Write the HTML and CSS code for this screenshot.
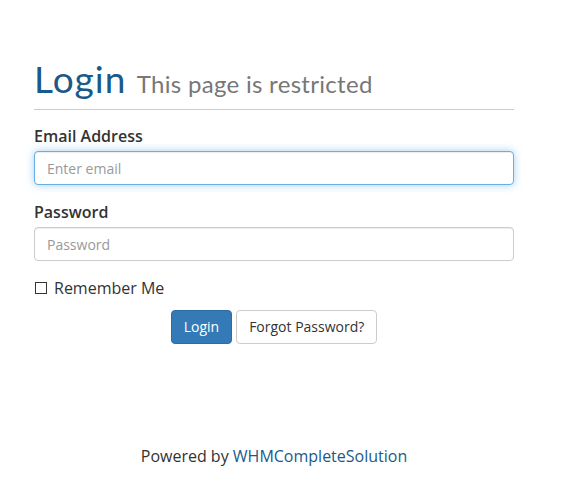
FILE: index.html
```html
<!DOCTYPE html>
<html>
<head>
<meta charset="utf-8">
<link rel="stylesheet" href="styles.css">
</head>
<body>
<div class="page">
  <div class="header">
    <h1 class="title">Login <small class="subtitle">This page is restricted</small></h1>
  </div>
  <form class="form">
    <div class="group">
      <label class="label">Email Address</label>
      <input class="input input-focus" type="text" placeholder="Enter email">
    </div>
    <div class="group">
      <label class="label">Password</label>
      <input class="input" type="password" placeholder="Password">
    </div>
    <div class="check">
      <span class="box"></span>
      <span class="check-text">Remember Me</span>
    </div>
    <div class="actions">
      <button type="button" class="btn btn-primary">Login</button>
      <button type="button" class="btn btn-default">Forgot Password?</button>
    </div>
  </form>
  <div class="footer">Powered by <a class="link" href="#">WHMCompleteSolution</a></div>
</div>
</body>
</html>
```
FILE: styles.css
```css
html, body {
  margin: 0;
  padding: 0;
  background: #fff;
}
body {
  font-family: "Open Sans", "Liberation Sans", sans-serif;
  font-size: 14px;
  color: #333;
}
.page {
  width: 480px;
  margin-left: 34px;
  padding-top: 59px;
}
.header {
  border-bottom: 1px solid #ccc;
  padding-bottom: 5px;
}
.title {
  margin: 0;
  font-family: "Lato", "Open Sans", sans-serif;
  font-weight: 400;
  font-size: 37px;
  line-height: 40px;
  letter-spacing: 1px;
  color: #1a5a8b;
}
.subtitle {
  font-size: 24px;
  color: #777;
  font-weight: 400;
  letter-spacing: 0.3px;
}
.form {
  margin-top: 15px;
}
.group {
  display: flex;
  flex-direction: column;
  margin-bottom: 16px;
}
.label {
  font-weight: 600;
  font-size: 16px;
  line-height: 22px;
  margin-bottom: 4px;
}
.input {
  box-sizing: border-box;
  height: 34px;
  width: 100%;
  padding: 6px 12px;
  border: 1px solid #ccc;
  border-radius: 4px;
  font-family: "Open Sans", sans-serif;
  font-size: 14px;
  color: #555;
  outline: none;
  box-shadow: inset 0 1px 1px rgba(0,0,0,.075);
}
.input::placeholder {
  color: #999;
}
.input-focus {
  border-color: #66afe9;
  box-shadow: inset 0 1px 1px rgba(0,0,0,.075), 0 0 8px rgba(102,175,233,.6);
}
.check {
  display: flex;
  align-items: center;
  gap: 7px;
  font-size: 16px;
  line-height: 22px;
  padding-left: 1px;
}
.box {
  box-sizing: border-box;
  width: 12px;
  height: 12px;
  border: 1px solid #333;
}
.actions {
  display: flex;
  justify-content: center;
  gap: 4px;
  margin-top: 11px;
}
.btn {
  font-family: "Open Sans", sans-serif;
  font-size: 14px;
  line-height: 20px;
  padding: 6px 12px;
  border-radius: 4px;
  border: 1px solid transparent;
  height: 34px;
  box-sizing: border-box;
}
.btn-primary {
  background: #337ab7;
  border-color: #2e6da4;
  color: #fff;
}
.btn-default {
  background: #fff;
  border-color: #ccc;
  color: #333;
}
.footer {
  text-align: center;
  font-size: 16px;
  margin-top: 101px;
  color: #333;
}
.link {
  color: #1a5a8b;
  text-decoration: none;
}
```
